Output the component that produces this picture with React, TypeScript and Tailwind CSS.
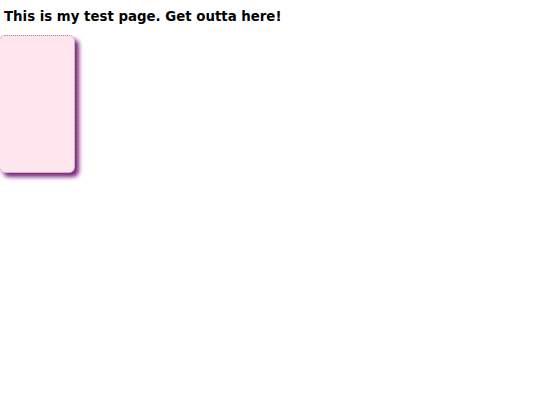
export default function App() {
  return (
    <div className="bg-white w-[540px] h-[405px] overflow-hidden" style={{ fontFamily: '"DejaVu Sans", Verdana, sans-serif' }}>
      <div className="pt-[9px] pl-[4px] text-[13.33px] font-bold leading-[16px] text-black">
        This is my test page. Get outta here!
      </div>
      <div className="mt-[10px] ml-[-1px] w-[76px] h-[138px] rounded-[6px] border border-dotted border-[#b07ab0] bg-[#ffe6ee] shadow-[4px_4px_4px_#7a2a7a]" />
    </div>
  );
}
